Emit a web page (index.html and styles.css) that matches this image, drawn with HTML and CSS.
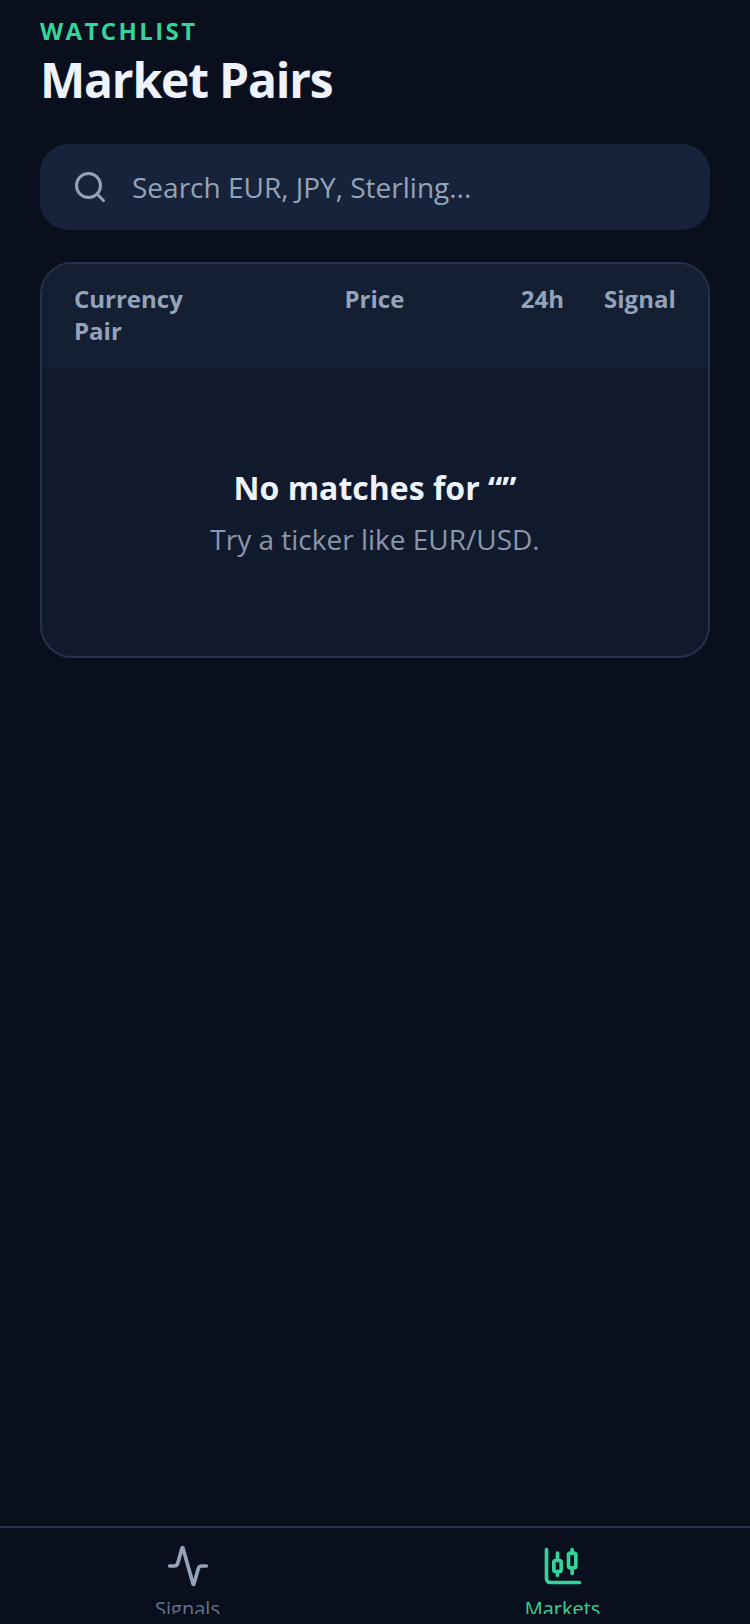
FILE: index.html
```html
<!doctype html>
<html>
<head>
<meta charset="utf-8">
<title>Market Pairs</title>
<link rel="stylesheet" href="styles.css">
</head>
<body>
	<main class="page">
		<p class="eyebrow">WATCHLIST</p>
		<h1 class="title">Market Pairs</h1>
		<div class="search">
			<svg class="search-icon" width="36" height="36" viewBox="0 0 24 24" fill="none" stroke="currentColor" stroke-width="2" stroke-linecap="round" stroke-linejoin="round"><circle cx="11" cy="11" r="8"/><path d="m21 21-4.300-4.300"/></svg>
			<span class="placeholder">Search EUR, JPY, Sterling...</span>
		</div>
		<section class="table">
			<div class="table-head">
				<span class="col col-pair">Currency Pair</span>
				<span class="col col-price">Price</span>
				<span class="col col-change">24h</span>
				<span class="col col-signal">Signal</span>
			</div>
			<div class="empty">
				<p class="empty-title">No matches for “”</p>
				<p class="empty-text">Try a ticker like EUR/USD.</p>
			</div>
		</section>
	</main>
	<nav class="tabs">
		<div class="tab">
			<svg class="tab-icon" width="44" height="44" viewBox="0 0 24 24" fill="none" stroke="currentColor" stroke-width="2" stroke-linecap="round" stroke-linejoin="round"><path d="M22 12h-2.480a2 2 0 0 0-1.930 1.460l-2.350 8.360a.25.25 0 0 1-.48 0L9.240 2.180a.25.25 0 0 0-.48 0l-2.350 8.360A2 2 0 0 1 4.490 12H2"/></svg>
			<span class="tab-label">Signals</span>
		</div>
		<div class="tab tab-active">
			<svg class="tab-icon" width="44" height="44" viewBox="0 0 24 24" fill="none" stroke="currentColor" stroke-width="2" stroke-linecap="round" stroke-linejoin="round"><path d="M9 5v4"/><rect x="7" y="9" width="4" height="6" rx="1"/><path d="M9 15v2"/><path d="M17 3v2"/><rect x="15" y="5" width="4" height="8" rx="1"/><path d="M17 13v3"/><path d="M3 3v16a2 2 0 0 0 2 2h16"/></svg>
			<span class="tab-label">Markets</span>
		</div>
	</nav>
</body>
</html>
```

FILE: styles.css
```css
*{
	margin:0;
	padding:0;
	box-sizing:border-box;
}
html,body{
	height:100%;
}
body{
	width:750px;
	height:1624px;
	background:#0a0f1e;
	font-family:"Open Sans","Noto Sans",sans-serif;
	display:flex;
	flex-direction:column;
	overflow:hidden;
}
.page{
	flex:1;
	padding:15px 40px 0;
}
.eyebrow{
	font-size:24px;
	line-height:32px;
	font-weight:700;
	letter-spacing:2.4px;
	color:#34d399;
}
.title{
	font-size:48px;
	line-height:66px;
	font-weight:700;
	letter-spacing:-1.2px;
	color:#edf2fc;
	margin-bottom:31px;
}
.search{
	height:86px;
	border-radius:28px;
	background:#17233a;
	display:flex;
	align-items:center;
	gap:24px;
	padding:0 32px;
	color:#94a3b8;
}
.placeholder{
	font-size:28px;
}
.table{
	margin-top:32px;
	border:2px solid #263149;
	border-radius:32px;
	background:#111a2c;
	overflow:hidden;
}
.table-head{
	display:flex;
	background:#141f33;
	padding:19px 32px 0;
	height:104px;
	font-size:24px;
	line-height:32px;
	font-weight:700;
	color:#94a3b8;
}
.col-pair{
	width:130px;
}
.col-price{
	margin-left:140.5px;
}
.col-change{
	margin-left:116.5px;
}
.col-signal{
	margin-left:40px;
}
.empty{
	height:288px;
	padding-top:1px;
	display:flex;
	flex-direction:column;
	align-items:center;
	justify-content:center;
	gap:9px;
}
.empty-title{
	font-size:32px;
	line-height:44px;
	font-weight:700;
	color:#edf2fc;
}
.empty-text{
	font-size:28px;
	line-height:40px;
	color:#8a97ad;
}
.tabs{
	flex:none;
	height:98px;
	border-top:2px solid #263149;
	display:flex;
	overflow:hidden;
}
.tab{
	flex:1;
	height:86px;
	overflow:hidden;
	padding-top:16px;
	display:flex;
	flex-direction:column;
	align-items:center;
	color:#94a3b8;
}
.tab-icon{
	flex:none;
}
.tab-active{
	color:#34d399;
}
.tab-label{
	flex:none;
	font-size:20px;
	line-height:28px;
	margin-top:7px;
}
.tab .tab-label{
	color:#64748b;
}
.tab-active .tab-label{
	color:#34d399;
}
```
